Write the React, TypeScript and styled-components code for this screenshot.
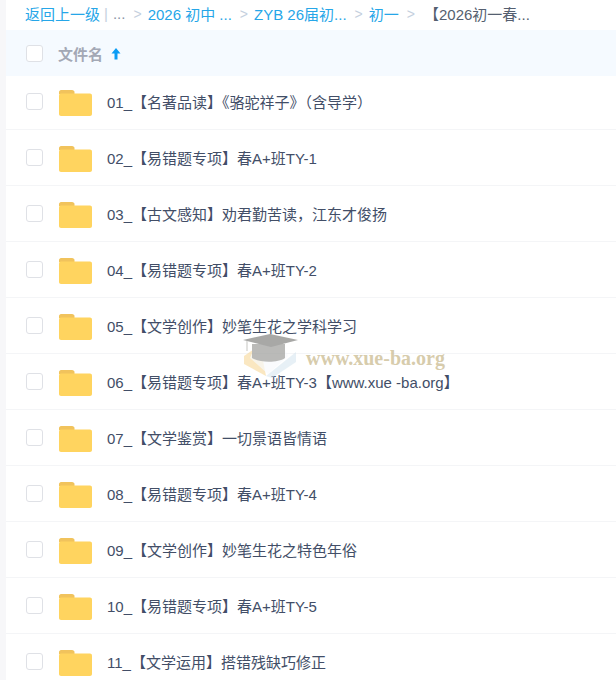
// App.tsx

import styled, { createGlobalStyle } from "styled-components";

const GlobalStyle = createGlobalStyle`
  html, body {
    margin: 0;
    padding: 0;
    background: #f7f7f9;
    overflow: hidden;
  }
`;

const Page = styled.div`
  position: relative;
  width: 610px;
  height: 680px;
  margin-left: 6px;
  background: #fff;
  overflow: hidden;
  font-family: "Liberation Sans", "Noto Sans CJK SC", sans-serif;
`;

const Crumbs = styled.div`
  display: flex;
  align-items: center;
  height: 30px;
  padding: 0 0 3px 19px;
  box-sizing: border-box;
  font-size: 15px;
  color: #424e67;
  white-space: nowrap;
`;

const CrumbLink = styled.span`
  color: #26a6e8;
`;

const Divider = styled.span`
  color: #c5d0de;
  margin: 0 5px 0 4px;
`;

const Dots = styled.span`
  color: #8a94a6;
`;

const Sep = styled.span`
  color: #c5d0de;
  font-size: 14px;
  margin: 0 6px 0 8px;
`;

const Current = styled.span`
  color: #555f70;
  margin-left: 3px;
`;

const HeaderRow = styled.div`
  position: relative;
  z-index: 1;
  display: flex;
  align-items: center;
  height: 46px;
  padding-left: 20px;
  background: #f5faff;
`;

const Check = styled.span`
  flex: none;
  box-sizing: border-box;
  width: 17px;
  height: 17px;
  border: 1px solid #dfe1e6;
  border-radius: 3px;
  background: #fff;
`;

const HeaderLabel = styled.span`
  margin-left: 15px;
  font-size: 15px;
  font-weight: 700;
  color: #a3a8b5;
`;

const SortArrow = styled.svg`
  margin-left: 8px;
`;

const List = styled.div`
  margin-top: -2px;
`;

const Row = styled.div`
  display: flex;
  align-items: center;
  height: 56px;
  padding-left: 20px;
  box-sizing: border-box;
  border-bottom: 1px solid #f4f5f7;
`;

const Folder = styled.svg`
  flex: none;
  margin: 2px 0 0 16px;
`;

const Name = styled.span`
  margin-left: 15px;
  font-size: 15px;
  color: #424e67;
  white-space: nowrap;
`;

const Watermark = styled.div`
  position: absolute;
  left: 232px;
  top: 334px;
  display: flex;
  align-items: flex-start;
  pointer-events: none;
`;

const MarkText = styled.span`
  margin: 13px 0 0 8px;
  font-family: "Liberation Serif", serif;
  font-size: 20px;
  font-weight: 700;
  color: rgba(205, 190, 150, 0.8);
`;

const files = [
  "01_【名著品读】《骆驼祥子》（含导学）",
  "02_【易错题专项】春A+班TY-1",
  "03_【古文感知】劝君勤苦读，江东才俊扬",
  "04_【易错题专项】春A+班TY-2",
  "05_【文学创作】妙笔生花之学科学习",
  "06_【易错题专项】春A+班TY-3【www.xue -ba.org】",
  "07_【文学鉴赏】一切景语皆情语",
  "08_【易错题专项】春A+班TY-4",
  "09_【文学创作】妙笔生花之特色年俗",
  "10_【易错题专项】春A+班TY-5",
  "11_【文学运用】搭错残缺巧修正",
];

const FolderIcon = () => (
  <Folder width="33" height="26" viewBox="0 0 33 26">
    <path d="M2 0h11c1.500 0 2.500 1 2.500 2v2H0V2c0-1 1-2 2-2z" fill="#f1c35c" />
    <path d="M2 3.500h29c1.100 0 2 .9 2 2V24c0 1.100-.9 2-2 2H2c-1.100 0-2-.9-2-2V5.500c0-1.100.9-2 2-2z" fill="#ffd45f" />
  </Folder>
);

const CapMark = () => (
  <svg width="60" height="46" viewBox="0 0 60 46" opacity="0.8">
    <path d="M6 22 L22 11 L28 42 L6 30 Z" fill="#f6d592" opacity="0.7" />
    <path d="M28 42 L58 18 L58 28 L34 44 Z" fill="#d5e6f0" opacity="0.7" />
    <path d="M12 24 L30 40 L50 22 L46 14 L16 14 Z" fill="#f6fafc" opacity="0.7" />
    <path d="M14 10 L14 24 C22 29 40 29 47 24 L47 10 Z" fill="#a9a9a7" />
    <path d="M5 6 L32 0 L60 6 L33 13 Z" fill="#939391" />
    <path d="M9 7 L9 17" stroke="#d0d0cd" strokeWidth="1.500" />
  </svg>
);

const App = () => {
  return (
    <Page>
      <GlobalStyle />
      <Crumbs>
        <CrumbLink>返回上一级</CrumbLink>
        <Divider>|</Divider>
        <Dots>...</Dots>
        <Sep>&gt;</Sep>
        <CrumbLink>2026 初中 ...</CrumbLink>
        <Sep>&gt;</Sep>
        <CrumbLink>ZYB 26届初...</CrumbLink>
        <Sep>&gt;</Sep>
        <CrumbLink>初一</CrumbLink>
        <Sep>&gt;</Sep>
        <Current>【2026初一春...</Current>
      </Crumbs>
      <HeaderRow>
        <Check />
        <HeaderLabel>文件名</HeaderLabel>
        <SortArrow width="10" height="13" viewBox="0 0 10 13">
          <path d="M5 1 L9.500 6.500 H6.500 V12.500 H3.500 V6.500 H.5 Z" fill="#0a9cf5" />
        </SortArrow>
      </HeaderRow>
      <List>
        {files.map((name) => (
          <Row key={name}>
            <Check />
            <FolderIcon />
            <Name>{name}</Name>
          </Row>
        ))}
      </List>
      <Watermark>
        <CapMark />
        <MarkText>www.xue-ba.org</MarkText>
      </Watermark>
    </Page>
  );
};

export default App;
